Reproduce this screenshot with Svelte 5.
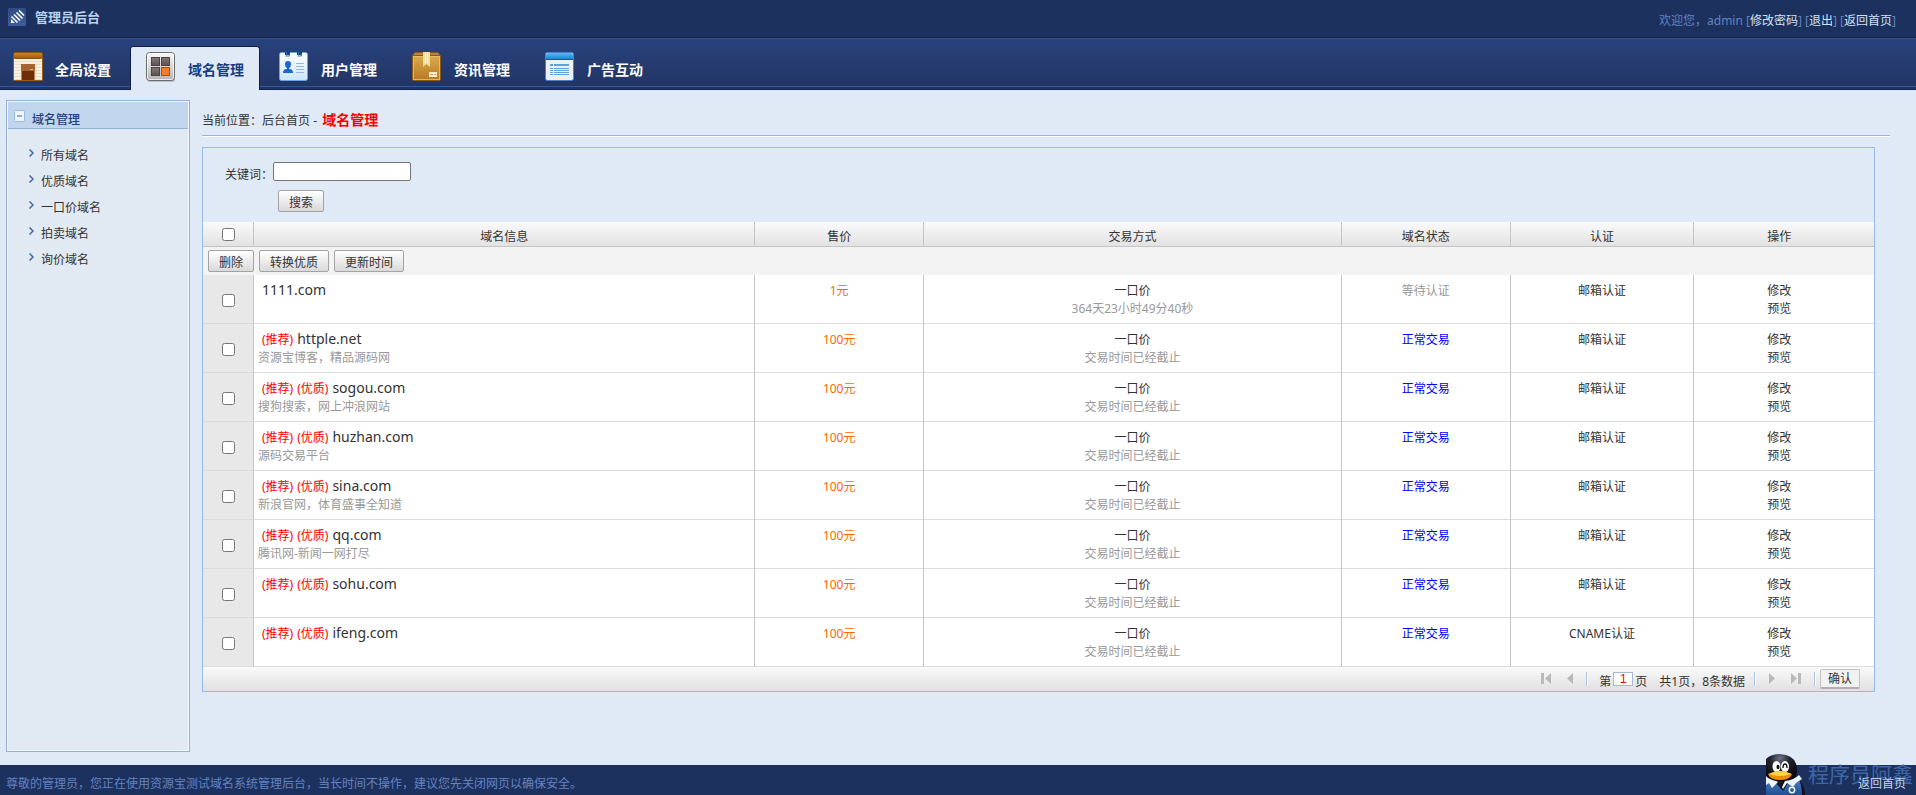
<script>
    const tabs = ["全局设置", "域名管理", "用户管理", "资讯管理", "广告互动"];
    const activeTab = 1;

    const menu = ["所有域名", "优质域名", "一口价域名", "拍卖域名", "询价域名"];

    const ended = "交易时间已经截止";

    let rows = $state([
        { name: "1111.com", tags: [], desc: "", price: "1元", time: "364天23小时49分40秒", ok: false, auth: "邮箱认证", checked: false },
        { name: "httple.net", tags: ["推荐"], desc: "资源宝博客，精品源码网", price: "100元", time: ended, ok: true, auth: "邮箱认证", checked: false },
        { name: "sogou.com", tags: ["推荐", "优质"], desc: "搜狗搜索，网上冲浪网站", price: "100元", time: ended, ok: true, auth: "邮箱认证", checked: false },
        { name: "huzhan.com", tags: ["推荐", "优质"], desc: "源码交易平台", price: "100元", time: ended, ok: true, auth: "邮箱认证", checked: false },
        { name: "sina.com", tags: ["推荐", "优质"], desc: "新浪官网，体育盛事全知道", price: "100元", time: ended, ok: true, auth: "邮箱认证", checked: false },
        { name: "qq.com", tags: ["推荐", "优质"], desc: "腾讯网-新闻一网打尽", price: "100元", time: ended, ok: true, auth: "邮箱认证", checked: false },
        { name: "sohu.com", tags: ["推荐", "优质"], desc: "", price: "100元", time: ended, ok: true, auth: "邮箱认证", checked: false },
        { name: "ifeng.com", tags: ["推荐", "优质"], desc: "", price: "100元", time: ended, ok: true, auth: "CNAME认证", checked: false },
    ]);

    let keyword = $state("");
    let page = $state("1");
    let open = $state(true);
    let allChecked = $derived(rows.every((r) => r.checked));

    function toggleAll(e) {
        const value = e.target.checked;
        rows.forEach((r) => (r.checked = value));
    }
</script>

<div class="page">
    <header class="top">
        <div class="brand">
            <svg width="18" height="18" viewBox="0 0 18 18" aria-hidden="true">
                <defs>
                    <linearGradient id="logo" x1="0" y1="0" x2="0" y2="1">
                        <stop offset="0" stop-color="#304b84" />
                        <stop offset="1" stop-color="#405d9c" />
                    </linearGradient>
                </defs>
                <rect width="18" height="18" rx="1" fill="url(#logo)" />
                <path d="M3 15v-4l4 4z" fill="#fff" />
                <path d="M3.500 8.500l6 6M6 6.500l6 6M8.500 4.500l6 6M11 2.500l5 5" stroke="#fff" stroke-width="1.600" />
            </svg>
            <span>管理员后台</span>
        </div>
        <div class="user">
            欢迎您，admin [<a href="#password">修改密码</a>] [<a href="#logout">退出</a>] [<a href="#home">返回首页</a>]
        </div>
    </header>

    <nav class="nav">
        {#each tabs as tab, i}
            <a class="tab" class:active={i === activeTab} href="#tab{i}">
                <svg width="32" height="34" viewBox="0 0 32 34" aria-hidden="true">
                    {#if i === 0}
                        <defs>
                            <linearGradient id="roof" x1="0" y1="0" x2="0" y2="1">
                                <stop offset="0" stop-color="#cb8b2b" />
                                <stop offset="1" stop-color="#a05707" />
                            </linearGradient>
                        </defs>
                        <rect x="0.500" y="3.500" width="29" height="25" rx="1" fill="#f8f0e0" stroke="#9a5c14" />
                        <path d="M1.500 9.500h27M1.500 12.500h27M1.500 15.500h27M1.500 18.500h27M1.500 21.500h27M1.500 24.500h27M1.500 27.500h27" stroke="#e9dcc2" />
                        <rect x="0.500" y="0.500" width="29" height="6" rx="2" fill="url(#roof)" stroke="#8f500c" />
                        <rect x="8" y="12" width="14" height="7" fill="#a6632f" />
                        <rect x="8" y="19" width="14" height="9" fill="#c1824b" />
                        <rect x="9" y="19" width="12" height="9" fill="#6f2d08" />
                        <path d="M17 17.500h3" stroke="#f2b05e" />
                    {:else if i === 1}
                        <defs>
                            <linearGradient id="panel" x1="0" y1="0" x2="0" y2="1">
                                <stop offset="0" stop-color="#fafafa" />
                                <stop offset="1" stop-color="#b4b4b4" />
                            </linearGradient>
                            <linearGradient id="cell" x1="0" y1="0" x2="0" y2="1">
                                <stop offset="0" stop-color="#827876" />
                                <stop offset="1" stop-color="#5c5351" />
                            </linearGradient>
                        </defs>
                        <rect x="1" y="2" width="28" height="28" rx="3" fill="#8b98aa" opacity="0.500" />
                        <rect x="0.500" y="0.500" width="28" height="28" rx="3" fill="url(#panel)" stroke="#6d6b6b" />
                        <rect x="1.500" y="1.500" width="26" height="26" rx="2" fill="none" stroke="#fff" opacity="0.700" />
                        <g fill="url(#cell)" stroke="#494443">
                            <rect x="5.500" y="5.500" width="8" height="8" />
                            <rect x="15.500" y="5.500" width="8" height="8" />
                            <rect x="5.500" y="15.500" width="8" height="8" />
                        </g>
                        <rect x="15.500" y="15.500" width="8" height="8" fill="#f47d2c" stroke="#b9480c" />
                    {:else if i === 2}
                        <defs>
                            <linearGradient id="card" x1="0" y1="0" x2="0" y2="1">
                                <stop offset="0" stop-color="#ffffff" />
                                <stop offset="1" stop-color="#c9e7fb" />
                            </linearGradient>
                        </defs>
                        <rect x="0.500" y="0.500" width="28" height="28" rx="2" fill="url(#card)" stroke="#6ba4e2" />
                        <path d="M6 0h5v3h-5zM18 0h5v3h-5z" fill="#233d77" />
                        <path d="M7.500 0v3.500M10.500 2v2h-4M19.500 0v3.500M22.500 2v2h-4" fill="none" stroke="#3e76bd" />
                        <path d="M6 12q0-3 3-3t3 3q0 3-2 4v1q4 0 4 4h-10q0-4 4-4v-1q-2-1-2-4z" fill="#1766d1" />
                        <path d="M17 11.500h8M17 14.500h8M17 17.500h8M17 20.500h8" stroke="#9eb7d4" />
                    {:else if i === 3}
                        <defs>
                            <linearGradient id="box" x1="0" y1="0" x2="0" y2="1">
                                <stop offset="0" stop-color="#dfb250" />
                                <stop offset="1" stop-color="#b97724" />
                            </linearGradient>
                        </defs>
                        <path d="M3 0.500h23l2.500 3.500v23q0 1.500-1.500 1.500h-25q-1.500 0-1.500-1.500v-23z" fill="url(#box)" stroke="#8b5b16" />
                        <path d="M3 1h23l2 3h-27z" fill="#b0853f" />
                        <rect x="1.500" y="4.500" width="26" height="23" fill="none" stroke="#e8c36c" opacity="0.800" />
                        <path d="M1 3.500h27" stroke="#8b5b16" />
                        <path d="M11 0h7v15l-3.500-3-3.500 3z" fill="#f1dda4" />
                        <path d="M13.500 1v10M15.500 1v10" stroke="#fff8df" />
                        <rect x="17" y="20" width="8" height="5" fill="#f8edcf" />
                        <path d="M18 22.500h3M22 22.500h2" stroke="#d0a75c" />
                    {:else}
                        <defs>
                            <linearGradient id="bar" x1="0" y1="0" x2="0" y2="1">
                                <stop offset="0" stop-color="#58b9f6" />
                                <stop offset="1" stop-color="#1877d4" />
                            </linearGradient>
                        </defs>
                        <rect x="0.500" y="0.500" width="28" height="28" rx="2" fill="#eeeff1" stroke="#4c7fc4" />
                        <path d="M1 8v-5q0-2 2-2h23q2 0 2 2v5z" fill="url(#bar)" />
                        <path d="M1 7.500h27" stroke="#1557a5" />
                        <path d="M5 12.500h3M9 12.500h15M5 16.500h3M9 16.500h15M5 18.500h3M9 18.500h15M5 20.500h3M9 20.500h15M5 22.500h3M9 22.500h15" stroke="#63a0d4" />
                        <path d="M5 13.500h3M9 13.500h15" stroke="#63a0d4" />
                    {/if}
                </svg>
                <span>{tab}</span>
            </a>
        {/each}
    </nav>

    <div class="body">
        <aside class="side">
            <button class="side-head" onclick={() => (open = !open)}>
                <svg width="11" height="12" viewBox="0 0 11 12" aria-hidden="true">
                    <rect x="0.500" y="0.500" width="10" height="11" rx="1" fill="#eef5fd" stroke="#96b8de" />
                    <path d="M3 6h5" stroke="#3c659f" />
                </svg>
                域名管理
            </button>
            {#if open}
                <ul>
                    {#each menu as item}
                        <li>
                            <svg width="5" height="8" viewBox="0 0 5 8" aria-hidden="true">
                                <path d="M0.500 0.500l3.500 3.500l-3.500 3.500" fill="none" stroke="#4865a4" stroke-width="1.500" />
                            </svg>
                            <a href="#menu">{item}</a>
                        </li>
                    {/each}
                </ul>
            {/if}
        </aside>

        <main>
            <div class="crumb">当前位置：<a href="#admin">后台首页</a> - <strong>域名管理</strong></div>

            <section class="panel">
                <form class="search" onsubmit={(e) => e.preventDefault()}>
                    <div class="field">
                        <label for="keyword">关键词：</label>
                        <input id="keyword" type="text" bind:value={keyword} />
                    </div>
                    <button class="btn">搜索</button>
                </form>

                <table>
                    <colgroup>
                        <col class="c-check" />
                        <col class="c-info" />
                        <col class="c-price" />
                        <col class="c-deal" />
                        <col class="c-state" />
                        <col class="c-auth" />
                        <col />
                    </colgroup>
                    <thead>
                        <tr>
                            <th><input type="checkbox" aria-label="全选" checked={allChecked} onchange={toggleAll} /></th>
                            <th>域名信息</th>
                            <th>售价</th>
                            <th>交易方式</th>
                            <th>域名状态</th>
                            <th>认证</th>
                            <th class="act">操作</th>
                        </tr>
                    </thead>
                    <tbody>
                        <tr>
                            <td class="tools" colspan="7">
                                <div>
                                    <button class="btn">删除</button>
                                    <button class="btn">转换优质</button>
                                    <button class="btn">更新时间</button>
                                </div>
                            </td>
                        </tr>
                        {#each rows as row}
                            <tr>
                                <td class="check"><input type="checkbox" aria-label={row.name} bind:checked={row.checked} /></td>
                                <td class="info">
                                    <div class="name">
                                        {#each row.tags as tag}<span class="tag">({tag})</span>{/each}<a href="#domain">{row.name}</a>
                                    </div>
                                    <div class="gray">{row.desc}</div>
                                </td>
                                <td class="price">{row.price}</td>
                                <td>
                                    <div>一口价</div>
                                    <div class="gray">{row.time}</div>
                                </td>
                                <td class={row.ok ? "ok" : "gray"}>{row.ok ? "正常交易" : "等待认证"}</td>
                                <td>{row.auth}</td>
                                <td class="act">
                                    <div><a href="#edit">修改</a></div>
                                    <div><a href="#preview">预览</a></div>
                                </td>
                            </tr>
                        {/each}
                    </tbody>
                </table>

                <div class="pager">
                    <button class="arrow" aria-label="首页">
                        <svg width="10" height="12" viewBox="0 0 10 12"><path d="M0 0h3v11h-3zM10 0v11l-6-5.500z" fill="#b9b9b9" /></svg>
                    </button>
                    <button class="arrow" aria-label="上一页">
                        <svg width="6" height="12" viewBox="0 0 6 12"><path d="M6 0v11l-6-5.500z" fill="#b9b9b9" /></svg>
                    </button>
                    <i class="sep"></i>
                    <label for="page">第</label>
                    <input id="page" type="text" bind:value={page} />
                    <span class="total">页</span>
                    <span class="count">共1页，8条数据</span>
                    <i class="sep"></i>
                    <button class="arrow" aria-label="下一页">
                        <svg width="6" height="12" viewBox="0 0 6 12"><path d="M0 0v11l6-5.500z" fill="#b9b9b9" /></svg>
                    </button>
                    <button class="arrow" aria-label="末页">
                        <svg width="10" height="12" viewBox="0 0 10 12"><path d="M7 0h3v11h-3zM0 0v11l6-5.500z" fill="#b9b9b9" /></svg>
                    </button>
                    <i class="sep"></i>
                    <button class="go">确认</button>
                </div>
            </section>
        </main>
    </div>

    <footer>
        <span>尊敬的管理员，您正在使用资源宝测试域名系统管理后台，当长时间不操作，建议您先关闭网页以确保安全。</span>
        <a href="#home">返回首页</a>
        <div class="mark">
            <svg width="40" height="41" viewBox="0 0 40 41" aria-hidden="true">
                <defs>
                    <radialGradient id="head" cx="0.450" cy="0.150" r="0.700">
                        <stop offset="0" stop-color="#6d7286" />
                        <stop offset="0.450" stop-color="#23242f" />
                        <stop offset="1" stop-color="#0a0a10" />
                    </radialGradient>
                    <linearGradient id="shirt" x1="0" y1="0" x2="0" y2="1">
                        <stop offset="0" stop-color="#4f82c0" />
                        <stop offset="1" stop-color="#1f4f94" />
                    </linearGradient>
                </defs>
                <path d="M31 24q8 6 8 17h-8z" fill="#10131d" />
                <path d="M0 25l32-1q4 6 4 17h-36z" fill="url(#shirt)" />
                <path d="M0 5q5-5 14-5q17 1 17 16q0 8-4 11q-12 3-27-2z" fill="url(#head)" />
                <path d="M8 27q9 3 16-1l-7 11z" fill="#11131c" />
                <path d="M0 22q2 3 10 5l2 1l-6 6l-3-5l-3 2z" fill="#edf4fc" />
                <path d="M33 21l3 4l-6 4l-3 4l-6-4l-4 6l-1-2l3-6q9-1 14-6z" fill="#edf4fc" />
                <ellipse cx="10.500" cy="12.500" rx="4" ry="5.500" fill="#fff" />
                <ellipse cx="19" cy="12.500" rx="4" ry="5.500" fill="#fff" />
                <ellipse cx="12" cy="13" rx="1.500" ry="2.200" fill="#111" />
                <path d="M17 14q0-4 2-4t2 4" fill="none" stroke="#111" stroke-width="1.400" />
                <path d="M2 20q6-3 12-3t12 3q-2 6-12 6t-12-6z" fill="#f08c0c" />
                <path d="M3 20q6-3 11-3t11 3q-5 2-11 2t-11-2z" fill="#ffd445" />
                <circle cx="26" cy="36" r="2.700" fill="none" stroke="#fff" stroke-width="1.400" />
            </svg>
            <span>程序员阿鑫</span>
        </div>
    </footer>
</div>

<style>
    :global(body) {
        margin: 0;
        background: #e0eaf6;
    }

    .page {
        min-height: 100vh;
        display: flex;
        flex-direction: column;
        font-family: "Noto Sans", "Noto Sans CJK SC", sans-serif;
        font-size: 12px;
        line-height: 18px;
        color: #333;
    }

    a {
        color: inherit;
        text-decoration: none;
    }

    a:hover {
        text-decoration: underline;
    }

    button,
    input {
        font-family: inherit;
        font-size: 12px;
        color: inherit;
        box-sizing: border-box;
    }

    svg {
        display: block;
        flex: none;
    }

    /* header */
    .top {
        height: 37px;
        display: flex;
        justify-content: space-between;
        background: #1c315e;
        border-bottom: 1px solid #14244b;
    }

    .brand {
        display: flex;
        gap: 9px;
        padding: 8px 0 0 8px;
        font-size: 13px;
        font-weight: bold;
        color: #b9d2ee;
    }

    .user {
        padding: 12px 20px 0 0;
        color: #6483c1;
    }

    .user a {
        color: #d2e3f7;
    }

    .nav {
        height: 52px;
        box-sizing: border-box;
        display: flex;
        align-items: flex-start;
        gap: 3px;
        padding-top: 7px;
        border-top: 1px solid #34508e;
        background: linear-gradient(#29427d, #223665 47px, #34569b 47px, #34569b 48px, #1f3566 48px, #1f3566 50px, #151f4c 50px);
    }

    .tab {
        width: 130px;
        height: 44px;
        box-sizing: border-box;
        display: flex;
        gap: 10px;
        padding: 5px 0 0 15px;
        border: 1px solid transparent;
        border-bottom: none;
        border-radius: 3px 3px 0 0;
        font-size: 14px;
        font-weight: bold;
        line-height: 26px;
        color: #fff;
    }

    .tab:first-child {
        width: 127px;
        padding-left: 12px;
    }

    .tab:hover {
        text-decoration: none;
    }

    .tab span {
        padding-top: 5px;
    }

    .tab.active {
        background: #e0eaf6;
        border-color: #14204a;
        color: #163b87;
    }

    /* layout */
    .body {
        flex: 1;
        display: flex;
        gap: 12px;
        padding: 10px 26px 13px 6px;
    }

    .side {
        width: 184px;
        box-sizing: border-box;
        flex: none;
        border: 1px solid #94b1dd;
        box-shadow: inset 0 0 0 1px #f2f6fb;
        padding: 1px;
        background: #e1e9f3;
        background-clip: padding-box;
    }

    .side-head {
        width: 100%;
        height: 27px;
        display: flex;
        align-items: center;
        gap: 7px;
        padding: 7px 0 0 6px;
        border: none;
        border-bottom: 1px solid #94b1dd;
        background: #c1d5ec;
        font-weight: 500;
        color: #22407f;
        cursor: pointer;
    }

    .side-head svg {
        margin-bottom: 6px;
    }

    .side ul {
        list-style: none;
        margin: 0;
        padding: 14px 0 0 21px;
    }

    .side li {
        display: flex;
        align-items: flex-start;
        gap: 7px;
        line-height: 26px;
    }

    .side li svg {
        margin-top: 6px;
    }

    main {
        flex: 1;
        min-width: 0;
    }

    .crumb {
        height: 35px;
        line-height: 40px;
        border-bottom: 1px solid #92b4e0;
        box-shadow: 0 1px #fff;
    }

    .crumb strong {
        padding-left: 2px;
        font-size: 14px;
        color: #f00;
    }

    .panel {
        margin: 11px 15px 0 0;
        border: 1px solid #99bbe8;
    }

    .search {
        padding: 14px 0 10px 22px;
    }

    .field {
        display: flex;
        align-items: center;
        line-height: 19px;
    }

    .field label {
        padding-top: 3px;
        height: 16px;
    }

    .field input {
        width: 138px;
        height: 19px;
        padding: 1px 2px;
        border: 1px solid #767676;
        border-radius: 2px;
        background: #fff;
    }

    .btn {
        height: 22px;
        padding: 4px 10px 0;
        border: 1px solid #a3a3a3;
        border-radius: 2px;
        background: linear-gradient(#fff, #f0f0f0 40%, #d9d9d9);
        line-height: 16px;
        cursor: pointer;
    }

    .search .btn {
        display: block;
        margin: 9px 0 0 53px;
    }

    /* table */
    table {
        width: 100%;
        table-layout: fixed;
        border-collapse: separate;
        border-spacing: 0;
        text-align: center;
    }

    .c-check {
        width: 51px;
    }

    .c-info {
        width: 30%;
    }

    .c-price,
    .c-state {
        width: 10.1%;
    }

    .c-deal {
        width: 25%;
    }

    .c-auth {
        width: 11%;
    }

    th {
        height: 24px;
        padding: 0;
        border-right: 1px solid #c4c4c4;
        border-bottom: 1px solid #c4c4c4;
        background: linear-gradient(#fafafa, #e2e2e4);
        font-weight: normal;
        line-height: 18px;
        vertical-align: bottom;
    }

    td {
        height: 48px;
        box-sizing: content-box;
        padding: 0;
        border-right: 1px solid #c4c4c4;
        border-bottom: 1px solid #dcdcdc;
        background: #fff;
        vertical-align: top;
    }

    td:not(.tools, .check) {
        height: 41px;
        padding-top: 7px;
    }

    th:last-child,
    td:last-child {
        border-right: none;
    }

    th.act,
    td.act {
        padding-right: 10px;
    }

    input[type="checkbox"] {
        display: block;
        width: 13px;
        height: 13px;
        margin: 0 auto 5px;
    }

    .check {
        background: #e8e8e8;
        vertical-align: middle;
    }

    .check input[type="checkbox"] {
        margin: 3px auto 0;
    }

    .tools {
        height: 28px;
        border-bottom: none;
        background: #f3f3f3;
    }

    .tools div {
        display: flex;
        gap: 5px;
        padding: 3px 5px;
    }

    .info {
        text-align: left;
    }

    .info div {
        height: 18px;
        padding-left: 4px;
    }

    .info .name {
        padding-left: 8px;
        line-height: 16px;
    }

    .name a {
        font-size: 14px;
    }

    .tag {
        margin-right: 4px;
        color: #f00;
    }

    .price {
        color: #f60;
    }

    .gray {
        color: #999;
    }

    .ok {
        color: #00f;
    }

    /* pager */
    .pager {
        height: 24px;
        display: flex;
        align-items: center;
        justify-content: flex-end;
        padding-right: 14px;
        background: linear-gradient(#fafafa, #e0e0e0);
        line-height: 18px;
    }

    .arrow {
        display: flex;
        padding: 0 8px;
        border: none;
        background: none;
        cursor: pointer;
    }

    .sep {
        width: 1px;
        height: 14px;
        margin: 0 5px;
        background: #aac4e2;
        border-right: 1px solid #fff;
    }

    .sep + label {
        margin-left: 6px;
    }

    .sep:nth-last-child(2) {
        margin-right: 4px;
    }

    .pager label,
    .pager span {
        padding-top: 5px;
    }

    .pager input {
        width: 20px;
        height: 14px;
        margin: 0 2px;
        padding: 0;
        border: 1px solid #a9b8d4;
        background: #fff;
        font-family: "Liberation Sans", sans-serif;
        text-align: center;
        color: #f00;
    }

    .count {
        margin: 0 4px 0 12px;
    }

    .go {
        width: 40px;
        height: 20px;
        padding: 0;
        border: 1px solid #c4c4c4;
        border-bottom: 2px solid #b0b0b0;
        border-radius: 2px;
        background: #f2f2f2;
        line-height: 16px;
        cursor: pointer;
    }

    /* footer */
    footer {
        position: relative;
        height: 30px;
        display: flex;
        justify-content: space-between;
        padding: 0 10px 0 6px;
        background: #1c315e;
        line-height: 38px;
        box-sizing: border-box;
        color: #6483c1;
    }

    footer > a {
        position: relative;
        z-index: 1;
        color: #c3d4ec;
    }

    .mark {
        position: absolute;
        right: 3px;
        bottom: 0;
        display: flex;
        gap: 2px;
        font-size: 21px;
        line-height: 40px;
        color: #3f66a8;
    }
</style>
